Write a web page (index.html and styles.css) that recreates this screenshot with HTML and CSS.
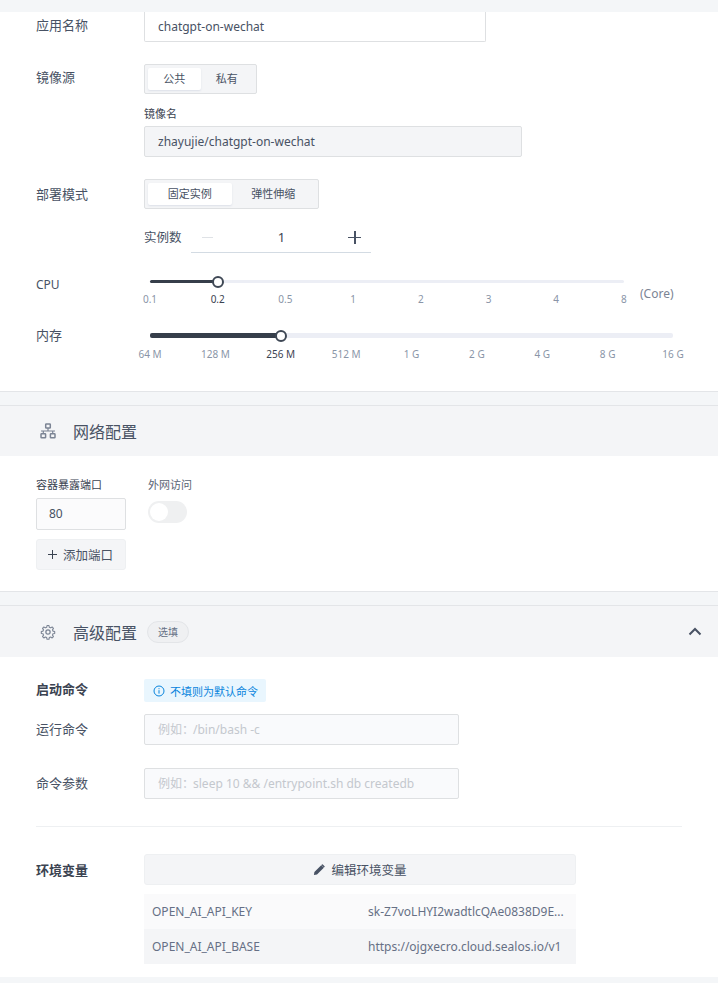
FILE: index.html
```html
<!DOCTYPE html>
<html lang="zh-CN">
<head>
    <meta charset="UTF-8">
    <title>应用配置</title>
    <link rel="stylesheet" href="styles.css">
</head>
<body>
    <div class="page">
        <!-- Basic config -->
        <section class="card basic">
            <div class="row name-row">
                <div class="label">应用名称</div>
                <div class="input name-input">chatgpt-on-wechat</div>
            </div>

            <div class="row image-row">
                <div class="label">镜像源</div>
                <div class="seg seg-image">
                    <div class="seg-item active">公共</div>
                    <div class="seg-item">私有</div>
                </div>
            </div>
            <div class="sub-label">镜像名</div>
            <div class="input image-input">zhayujie/chatgpt-on-wechat</div>

            <div class="row mode-row">
                <div class="label">部署模式</div>
                <div class="seg seg-mode">
                    <div class="seg-item active">固定实例</div>
                    <div class="seg-item">弹性伸缩</div>
                </div>
            </div>

            <div class="stepper-row">
                <span class="stepper-label">实例数</span>
                <div class="stepper">
                    <span class="step-btn minus"></span>
                    <span class="step-value">1</span>
                    <span class="step-btn plus"></span>
                </div>
            </div>

            <div class="slider-row cpu-row">
                <div class="label">CPU</div>
                <div class="slider cpu-slider">
                    <div class="track"><div class="fill cpu-fill"><span class="thumb"></span></div></div>
                    <div class="marks">
                        <span class="mark"><i>0.1</i></span>
                        <span class="mark on"><i>0.2</i></span>
                        <span class="mark"><i>0.5</i></span>
                        <span class="mark"><i>1</i></span>
                        <span class="mark"><i>2</i></span>
                        <span class="mark"><i>3</i></span>
                        <span class="mark"><i>4</i></span>
                        <span class="mark"><i>8</i></span>
                    </div>
                </div>
                <span class="unit">(Core)</span>
            </div>

            <div class="slider-row mem-row">
                <div class="label">内存</div>
                <div class="slider mem-slider">
                    <div class="track thick"><div class="fill mem-fill"><span class="thumb"></span></div></div>
                    <div class="marks">
                        <span class="mark"><i>64 M</i></span>
                        <span class="mark"><i>128 M</i></span>
                        <span class="mark on"><i>256 M</i></span>
                        <span class="mark"><i>512 M</i></span>
                        <span class="mark"><i>1 G</i></span>
                        <span class="mark"><i>2 G</i></span>
                        <span class="mark"><i>4 G</i></span>
                        <span class="mark"><i>8 G</i></span>
                        <span class="mark"><i>16 G</i></span>
                    </div>
                </div>
            </div>
        </section>

        <!-- Network -->
        <section class="card network">
            <header class="section-header">
                <svg class="section-icon" viewBox="0 0 16 16" fill="none" stroke="#7b8494" stroke-width="1.5">
                    <rect x="5.7" y="1" width="4.6" height="4" rx=".6"/>
                    <rect x="1" y="10.8" width="4.6" height="4" rx=".6"/>
                    <rect x="10.4" y="10.8" width="4.6" height="4" rx=".6"/>
                    <path d="M8 5v3M1 8h14M3.3 8v2.8M12.7 8v2.8" stroke-width="1.2"/>
                </svg>
                <span class="section-title">网络配置</span>
            </header>
            <div class="network-body">
                <div class="port-col">
                    <div class="sub-label flush">容器暴露端口</div>
                    <div class="input port-input">80</div>
                    <div class="add-port"><span class="add-plus"></span>添加端口</div>
                </div>
                <div class="public-col">
                    <div class="sub-label flush muted">外网访问</div>
                    <div class="switch"><span class="knob"></span></div>
                </div>
            </div>
        </section>

        <!-- Advanced -->
        <section class="card advanced">
            <header class="section-header tall">
                <svg class="section-icon" viewBox="0 0 24 24" fill="none" stroke="#7b8494" stroke-width="1.9" stroke-linejoin="round">
                    <circle cx="12" cy="12" r="3.2"/>
                    <path d="M10.3 2h3.4l.6 3 2.3 1 2.6-1.6 2.3 2.5-1.7 2.5.9 2.3 3 .6v3.4l-3 .6-.9 2.3 1.7 2.5-2.3 2.5-2.6-1.7-2.3 1-.6 3h-3.4l-.6-3-2.3-1-2.6 1.7-2.3-2.5 1.7-2.5-.9-2.3-3-.6v-3.4l3-.6.9-2.3-1.7-2.5 2.3-2.5 2.6 1.6 2.3-1z" transform="translate(12 12) scale(.86) translate(-12 -13.2)"/>
                </svg>
                <span class="section-title">高级配置</span>
                <span class="optional">选填</span>
                <svg class="chevron" viewBox="0 0 14 9" fill="none" stroke="#485264" stroke-width="2"><path d="M1.5 7.5 7 2l5.5 5.5"/></svg>
            </header>
            <div class="advanced-body">
                <div class="row cmd-title">
                    <div class="label strong">启动命令</div>
                    <div class="tip">
                        <svg class="tip-icon" viewBox="0 0 12 12" fill="none" stroke="#0884dd" stroke-width="1">
                            <circle cx="6" cy="6" r="5"/>
                            <path d="M6 5.2v3.4M6 3.2v1"/>
                        </svg>
                        不填则为默认命令
                    </div>
                </div>
                <div class="row cmd-row">
                    <div class="label">运行命令</div>
                    <div class="input cmd-input placeholder"><span class="ph-prefix">例如：</span>/bin/bash -c</div>
                </div>
                <div class="row cmd-row args">
                    <div class="label">命令参数</div>
                    <div class="input cmd-input placeholder"><span class="ph-prefix">例如：</span>sleep 10 &amp;&amp; /entrypoint.sh db createdb</div>
                </div>
                <div class="divider"></div>
                <div class="row env-row">
                    <div class="label strong">环境变量</div>
                    <div class="env-col">
                        <div class="env-btn">
                            <svg class="pen" viewBox="0 0 12 12" fill="#485264"><path d="M8.2 1.2 10.8 3.8 4 10.6.9 11.1l.5-3.1zM9 .5l.6-.3 2.2 2.2-.3.6-.6.5L8.4 1z"/></svg>
                            编辑环境变量
                        </div>
                        <div class="env-table">
                            <div class="env-line">
                                <span class="env-key">OPEN_AI_API_KEY</span>
                                <span class="env-val">sk-Z7voLHYI2wadtlcQAe0838D9E...</span>
                            </div>
                            <div class="env-line even">
                                <span class="env-key">OPEN_AI_API_BASE</span>
                                <span class="env-val">https://ojgxecro.cloud.sealos.io/v1</span>
                            </div>
                        </div>
                    </div>
                </div>
            </div>
        </section>
    </div>
</body>
</html>
```

FILE: styles.css
```css
/* Base */
* {
    margin: 0;
    padding: 0;
    box-sizing: border-box;
}

body {
    background: #f4f6f8;
    font-family: "Noto Sans", "Noto Sans CJK SC", sans-serif;
    color: #485264;
    font-size: 13px;
    overflow: hidden;
}

.page {
    width: 718px;
    height: 983px;
    padding-top: 12px;
    overflow: hidden;
}

.card {
    background: #fff;
    border-bottom: 1px solid #e3e5e8;
}

.card + .card {
    margin-top: 13px;
    border-top: 1px solid #e3e5e8;
}

.basic {
    height: 380px;
    padding: 0 36px;
}

.network {
    height: 187px;
}

.advanced {
    height: 372px;
    border-bottom: none;
}

/* Rows */
.row {
    display: flex;
    align-items: flex-start;
}

.label {
    width: 108px;
    flex: none;
    font-size: 13px;
    line-height: 18px;
    color: #485264;
}

.label.strong {
    font-weight: 700;
    color: #3b4351;
}

.sub-label {
    margin: 12px 0 4px 108px;
    font-size: 11px;
    line-height: 16px;
    color: #3b4351;
}

.sub-label.flush {
    margin: 0;
}

.sub-label.muted {
    color: #5a6474;
}

.input {
    height: 31px;
    border: 1px solid #dee0e2;
    border-radius: 2px;
    background: #fbfbfc;
    padding: 0 13px;
    font-size: 12px;
    line-height: 29px;
    color: #485264;
}

.name-row .label {
    padding-top: 4px;
}

.name-input {
    width: 342px;
    height: 30px;
    background: #fff;
    border-top: none;
    border-radius: 0 0 2px 2px;
}

.image-row {
    margin-top: 22px;
}

.image-row .label {
    padding-top: 4px;
}

.mode-row .label {
    padding-top: 6px;
}

.image-input {
    width: 378px;
    margin-left: 108px;
    background: #f4f5f7;
}

.mode-row {
    margin-top: 22px;
}

/* Segmented control */
.seg {
    display: flex;
    height: 30px;
    padding: 3px;
    background: #f4f5f7;
    border: 1px solid #dee0e2;
    border-radius: 2px;
}

.seg-image {
    width: 113px;
}

.seg-mode {
    width: 175px;
}

.seg-item {
    flex: 1;
    text-align: center;
    font-size: 11px;
    line-height: 22px;
    color: #485264;
}

.seg-item.active {
    background: #fff;
    border-radius: 2px;
    box-shadow: 0 1px 2px rgba(19, 51, 107, 0.1);
}

/* Stepper */
.stepper-row {
    display: flex;
    align-items: center;
    margin: 14px 0 0 108px;
    height: 30px;
}

.stepper-label {
    width: 47px;
    margin-bottom: 3px;
    font-size: 12.5px;
}

.stepper {
    display: flex;
    align-items: center;
    justify-content: space-between;
    width: 180px;
    height: 30px;
    padding: 0 10px 1px 11px;
    border-bottom: 1px solid #d3dbe3;
}

.step-btn {
    position: relative;
    width: 13px;
    height: 13px;
}

.step-btn::before {
    content: "";
    position: absolute;
    left: 0;
    right: 0;
    top: 6px;
    height: 1.5px;
    background: #485264;
}

.minus::before {
    right: 2px;
    background: #dfe2e6;
}

.plus::after {
    content: "";
    position: absolute;
    top: 0;
    bottom: 0;
    left: 6px;
    width: 1.5px;
    background: #485264;
}

.step-value {
    font-size: 13px;
    color: #3b4351;
}

/* Sliders */
.slider-row {
    display: flex;
    align-items: flex-start;
}

.cpu-row {
    margin-top: 23px;
}

.cpu-row .label {
    font-size: 12px;
}

.mem-row {
    margin-top: 21px;
}

.mem-row .label {
    margin-top: -1px;
}

.slider {
    margin-left: 6px;
}

.cpu-slider {
    width: 474px;
    padding-top: 4px;
}

.mem-slider {
    width: 523px;
    padding-top: 6px;
}

.track {
    height: 3px;
    background: #eceef5;
    border-radius: 2px;
}

.track.thick {
    height: 5px;
}

.fill {
    position: relative;
    height: 100%;
    background: #363e4a;
    border-radius: 2px;
}

.cpu-fill {
    width: 68px;
}

.mem-fill {
    width: 131px;
}

.thumb {
    position: absolute;
    right: -6px;
    top: 50%;
    width: 12px;
    height: 12px;
    margin-top: -6px;
    background: #fff;
    border: 2px solid #3f4855;
    border-radius: 50%;
}

.marks {
    display: flex;
    justify-content: space-between;
    margin-top: 9px;
}

.mark {
    width: 0;
    display: flex;
    justify-content: center;
    font-size: 10px;
    line-height: 14px;
    color: #8a95a7;
    white-space: nowrap;
}

.mark i {
    font-style: normal;
}

.mark.on {
    color: #3b4351;
}

.unit {
    margin: 10px 0 0 16px;
    font-size: 12px;
    line-height: 16px;
    color: #7b8494;
}

/* Section headers */
.section-header {
    display: flex;
    align-items: center;
    height: 50px;
    padding: 0 36px 0 40px;
    background: #f4f5f7;
}

.section-header.tall {
    height: 51px;
}

.section-icon {
    width: 16px;
    height: 16px;
    flex: none;
}

.section-title {
    margin-left: 17px;
    font-size: 16px;
    color: #485264;
}

.optional {
    margin-left: 10px;
    width: 42px;
    height: 22px;
    border: 1px solid #e3e5e8;
    border-radius: 11px;
    background: #eff0f2;
    text-align: center;
    font-size: 10px;
    line-height: 20px;
    color: #667085;
}

.chevron {
    width: 14px;
    height: 9px;
    margin-left: auto;
    margin-right: -20px;
}

/* Network */
.network-body {
    display: flex;
    padding: 21px 36px 0;
}

.port-col {
    width: 112px;
}

.port-input {
    width: 90px;
    height: 32px;
    margin-top: 5px;
    padding: 0 12px;
    line-height: 30px;
}

.add-port {
    display: flex;
    align-items: center;
    width: 90px;
    height: 31px;
    margin-top: 9px;
    padding-left: 11px;
    background: #f4f5f7;
    border: 1px solid #eef0f2;
    border-radius: 3px;
    font-size: 12.5px;
    color: #485264;
    white-space: nowrap;
}

.add-plus {
    width: 9px;
    height: 9px;
    margin-right: 6px;
    flex: none;
    background: linear-gradient(#3b4351, #3b4351) center / 9px 1px no-repeat,
        linear-gradient(#3b4351, #3b4351) center / 1px 9px no-repeat;
}

.switch {
    width: 39px;
    height: 22px;
    margin-top: 8px;
    padding: 2px;
    border-radius: 11px;
    background: #eff0f1;
}

.knob {
    display: block;
    width: 18px;
    height: 18px;
    border-radius: 50%;
    background: #fff;
}

/* Advanced */
.advanced-body {
    padding: 22px 36px 0;
}

.cmd-title .label {
    padding-top: 1px;
}

.tip {
    display: flex;
    align-items: center;
    height: 23px;
    padding: 0 8px 0 9px;
    background: #e9f6fe;
    border-radius: 2px;
    font-size: 11px;
    color: #0884dd;
}

.tip-icon {
    width: 12px;
    height: 12px;
    margin-right: 5px;
}

.cmd-row {
    margin-top: 12px;
}

.cmd-row .label {
    padding-top: 6px;
}

.cmd-row.args {
    margin-top: 23px;
}

.cmd-input {
    width: 315px;
    height: 31px;
    background: #f9fafc;
}

.placeholder {
    color: #c4c8ce;
}

.ph-prefix {
    margin-right: -1px;
}

.divider {
    height: 1px;
    margin-top: 27px;
    background: #eef0f2;
}

/* Env */
.env-row {
    margin-top: 27px;
}

.env-row .label {
    padding-top: 7px;
}

.env-col {
    width: 432px;
}

.env-btn {
    display: flex;
    align-items: center;
    justify-content: center;
    height: 31px;
    background: #f4f5f7;
    border: 1px solid #eef0f2;
    border-radius: 3px;
    font-size: 12.5px;
    color: #485264;
}

.pen {
    width: 12px;
    height: 12px;
    margin-right: 6px;
}

.env-table {
    margin-top: 9px;
}

.env-line {
    display: flex;
    align-items: center;
    height: 35px;
    padding-left: 8px;
    background: #fafafb;
    font-size: 12px;
    color: #667085;
}

.env-line.even {
    background: #f4f5f7;
}

.env-key {
    width: 216px;
    flex: none;
}

.env-val {
    white-space: nowrap;
}
```
